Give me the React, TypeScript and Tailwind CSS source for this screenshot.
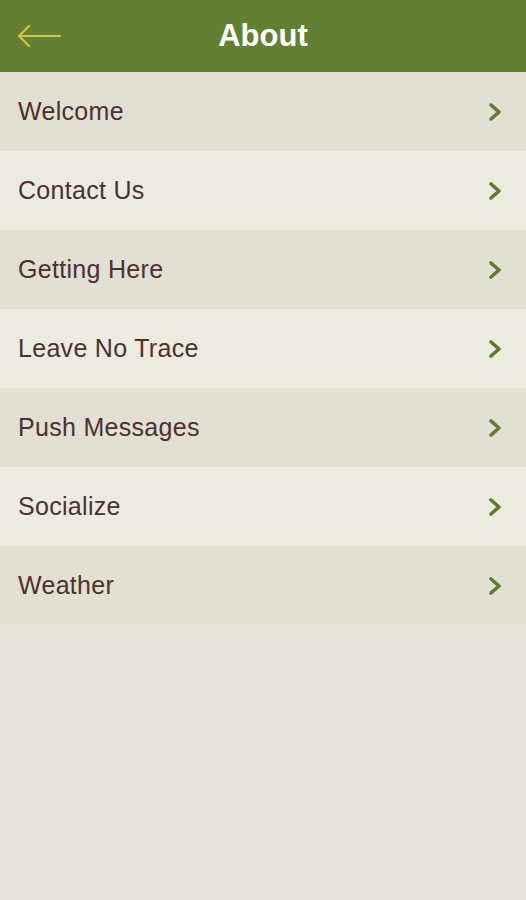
const items = [
  "Welcome",
  "Contact Us",
  "Getting Here",
  "Leave No Trace",
  "Push Messages",
  "Socialize",
  "Weather",
];

export default function App() {
  return (
    <div className="min-h-[900px] bg-[#e6e4d9] font-['Liberation_Sans',Arial,sans-serif]">
      {/* header */}
      <div className="relative flex h-[72px] items-center justify-center bg-[#637f33]">
        <button className="absolute left-[16px] top-[22px]">
          <svg width="46" height="28" viewBox="0 0 46 28" fill="none">
            <path
              d="M44 14H3M13 4L3 14l10 10"
              stroke="#d8c53c"
              strokeWidth="2"
              strokeLinecap="round"
              strokeLinejoin="round"
            />
          </svg>
        </button>
        <h1 className="text-[31px] font-bold text-white">About</h1>
      </div>

      {/* list */}
      <ul>
        {items.map((item, i) => (
          <li
            key={item}
            className={`flex h-[79px] items-center justify-between pl-[18px] pr-[24px] ${
              i % 2 === 0 ? "bg-[#e2dfd3]" : "bg-[#ecebe0]"
            }`}
          >
            <span className="text-[25px] tracking-[0.3px] text-[#4b3131]">{item}</span>
            <svg width="14" height="20" viewBox="0 0 14 20" fill="none">
              <path
                d="M3 3l8 7-8 7"
                stroke="#5f7b2f"
                strokeWidth="3.6"
                strokeLinecap="round"
                strokeLinejoin="round"
              />
            </svg>
          </li>
        ))}
      </ul>
    </div>
  );
}
